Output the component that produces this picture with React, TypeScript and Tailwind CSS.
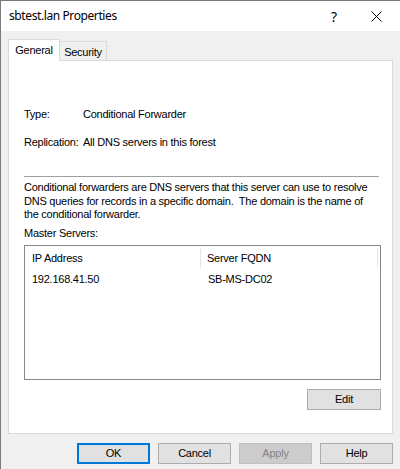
import React from "react";

const body = { fontFamily: '"Liberation Sans", Arial, sans-serif' };

function Btn({ label, primary, disabled }: { label: string; primary?: boolean; disabled?: boolean }) {
  const cls = primary
    ? "border-2 border-[#0078d7] bg-[#e1e1e1] text-black"
    : disabled
    ? "border border-[#bfbfbf] bg-[#cccccc] text-[#838383]"
    : "border border-[#adadad] bg-[#e1e1e1] text-black";
  return (
    <div className={`w-[73px] h-[21px] flex items-center justify-center text-[11px] tracking-[-0.25px] ${cls}`}>{label}</div>
  );
}

export default function App() {
  return (
    <div className="w-[400px] h-[469px] bg-[#f0f0f0] border-l border-t border-[#7a7a7a] flex flex-col overflow-hidden" style={body}>
      {/* title bar */}
      <div className="h-[30px] bg-white flex items-center shrink-0">
        <div className="pl-[8px] text-[12px] tracking-[-0.4px] text-black" style={{ fontFamily: '"Noto Sans", "Open Sans", sans-serif' }}>
          sbtest.lan Properties
        </div>
        <div className="flex-1" />
        <div className="text-[14px] text-black mr-[34px]" style={{ fontFamily: '"Noto Sans", sans-serif' }}>?</div>
        <svg width="11" height="11" viewBox="0 0 11 11" className="mr-[18px]">
          <path d="M0.5 0.5 L10.5 10.5 M10.5 0.5 L0.5 10.5" stroke="#000" strokeWidth="1" />
        </svg>
      </div>
      {/* tabs */}
      <div className="flex items-end pl-[7px] pt-[8px] h-[29px] shrink-0 text-[11px] tracking-[-0.25px]">
        <div className="relative z-10 w-[52px] h-[22px] -mb-[1px] bg-white border border-b-0 border-[#d9d9d9] text-black flex justify-center pt-[2px]">
          General
        </div>
        <div className="w-[47px] h-[19px] bg-[#f0f0f0] border border-l-0 border-b-0 border-[#d9d9d9] text-black flex justify-center pt-[2px]">
          Security
        </div>
      </div>
      {/* page */}
      <div className="ml-[7px] w-[385px] h-[374px] bg-white border border-[#d9d9d9] flex flex-col pl-[15px] pr-[11px] shrink-0 text-[11px] tracking-[-0.25px] text-black">
        <div className="mt-[47px] h-[13px] leading-[13px] flex">
          <span className="w-[59px]">Type:</span>
          <span>Conditional Forwarder</span>
        </div>
        <div className="mt-[15px] h-[13px] leading-[13px] flex">
          <span className="w-[59px]">Replication:</span>
          <span>All DNS servers in this forest</span>
        </div>
        <div className="mt-[27px] h-px bg-[#a0a0a0] mr-[2px]" />
        <div className="mt-[4px] leading-[13.5px] pr-[4px]">
          Conditional forwarders are DNS servers that this server can use to resolve DNS queries for records in a specific domain.&nbsp; The domain is the name of the conditional forwarder.
        </div>
        <div className="mt-[5px] h-[13px] leading-[13px]">Master Servers:</div>
        <div className="mt-[5px] h-[135px] border border-[#828790] bg-white flex flex-col">
          <div className="h-[25px] flex items-center">
            <div className="w-[176px] h-[20px] border-r border-[#e5e5e5] flex items-center pl-[7px]">IP Address</div>
            <div className="w-[177px] h-[20px] border-r border-[#e5e5e5] flex items-center pl-[6px]">Server FQDN</div>
          </div>
          <div className="h-[17px] flex items-center">
            <div className="w-[176px] pl-[7px]">192.168.41.50</div>
            <div className="pl-[7px]">SB-MS-DC02</div>
          </div>
        </div>
        <div className="mt-[9px] flex justify-end">
          <div className="w-[74px] h-[21px] border border-[#adadad] bg-[#e1e1e1] flex items-center justify-center">Edit</div>
        </div>
      </div>
      {/* buttons */}
      <div className="flex gap-[8px] pl-[76px] pt-[9px]">
        <Btn label="OK" primary />
        <Btn label="Cancel" />
        <Btn label="Apply" disabled />
        <Btn label="Help" />
      </div>
    </div>
  );
}
